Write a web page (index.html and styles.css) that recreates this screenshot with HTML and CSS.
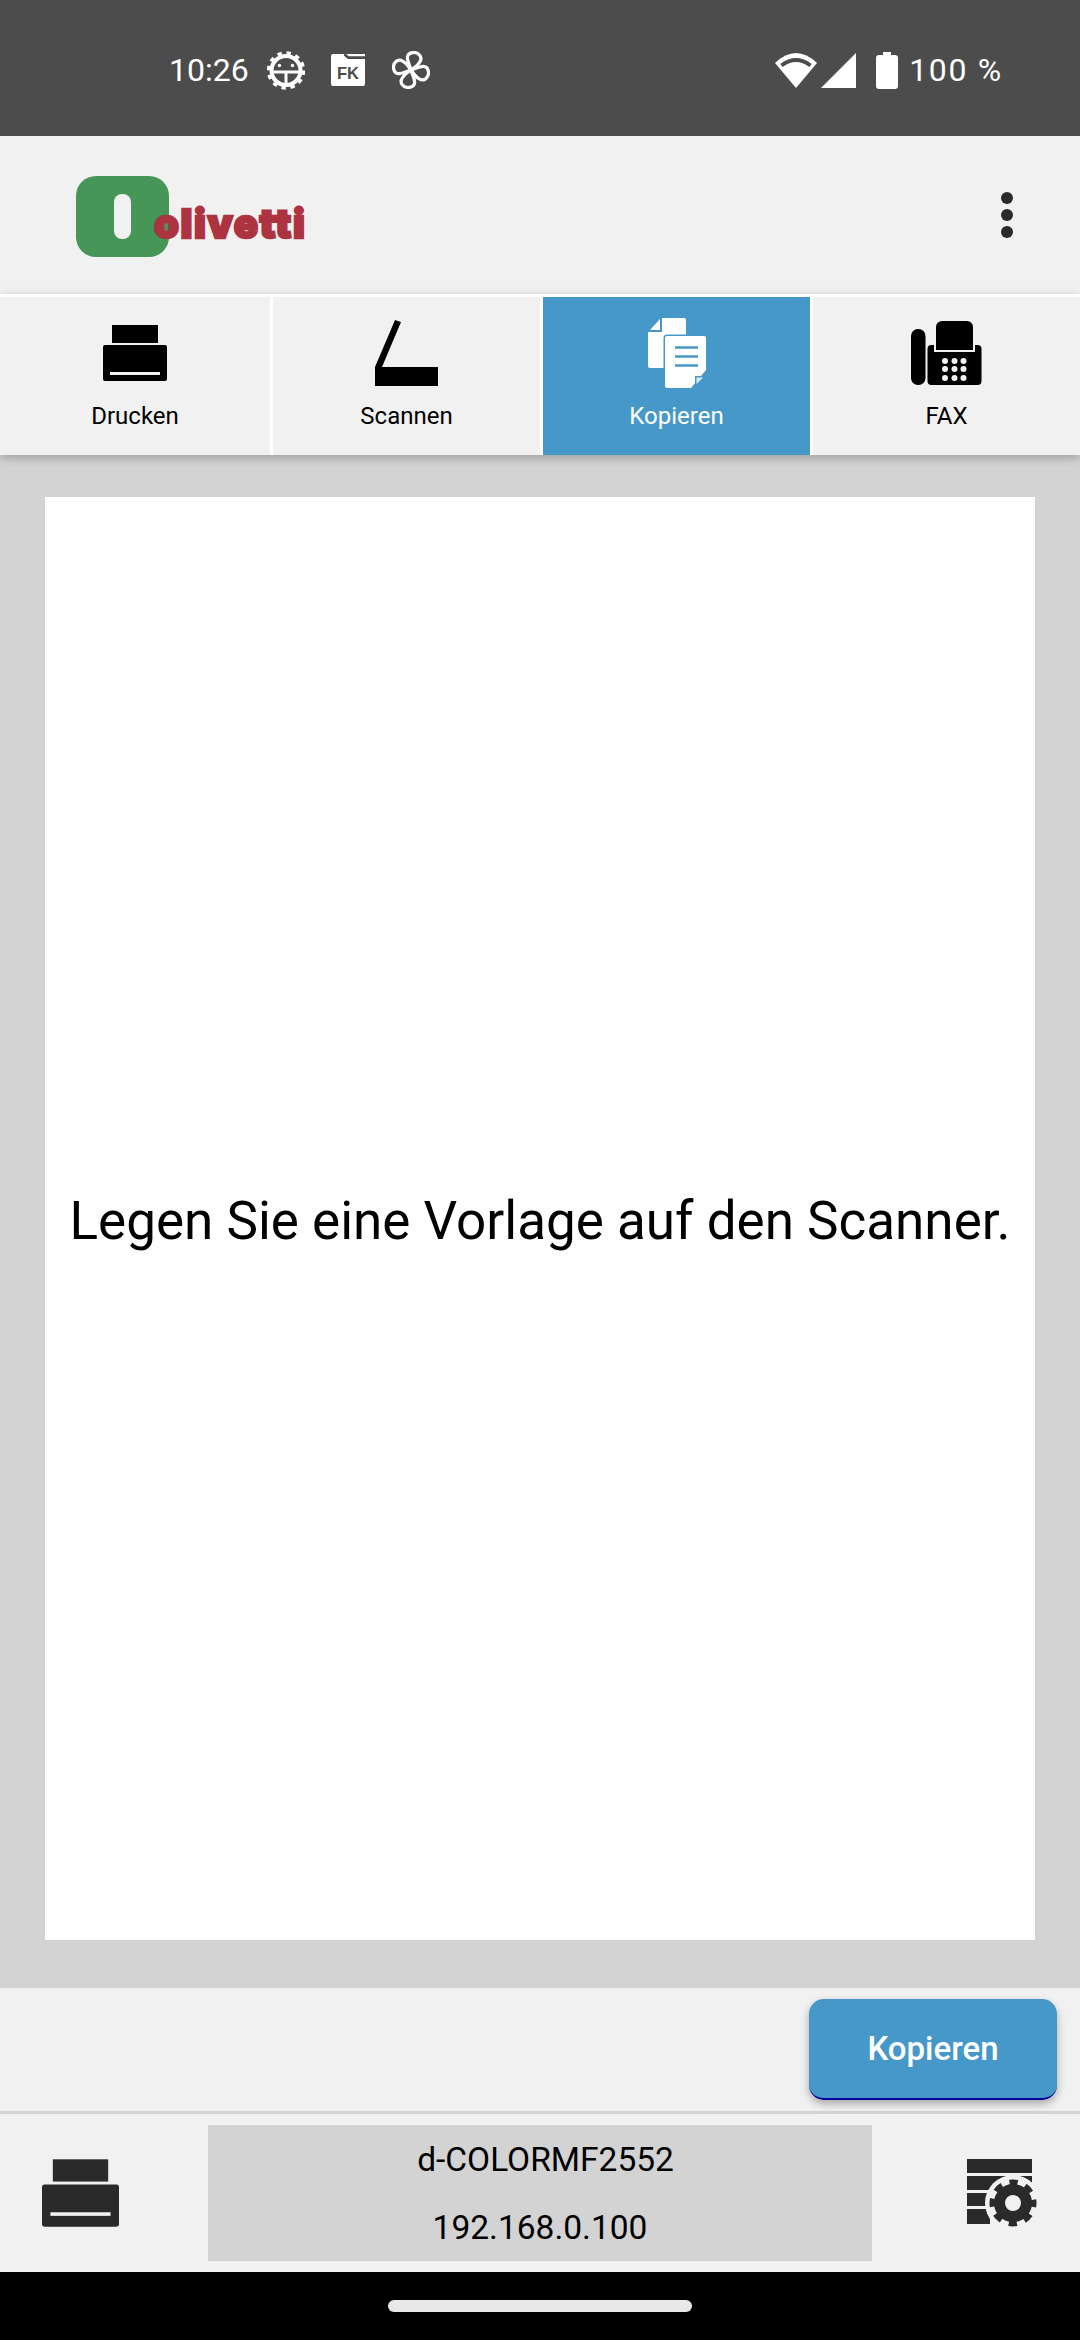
FILE: index.html
```html
<!DOCTYPE html>
<html lang="de">
<head>
    <meta charset="UTF-8">
    <meta name="viewport" content="width=device-width, initial-scale=1.0">
    <title>Kopieren</title>
    <link rel="stylesheet" href="styles.css">
</head>
<body>
    <!-- Android status bar -->
    <div class="status-bar">
        <div class="status-left">
            <span class="status-time">10:26</span>
            <svg class="icon-bug" viewBox="0 0 38 39">
                <circle cx="19" cy="19.5" r="14.5" fill="none" stroke="#fff" stroke-width="4"/>
                <circle cx="19" cy="19.5" r="17.5" fill="none" stroke="#fff" stroke-width="3.4" stroke-dasharray="4.4 4.76"/>
                <path d="M5 21H33M19 21V33" fill="none" stroke="#fff" stroke-width="3"/>
                <circle cx="12.5" cy="14.5" r="1.7" fill="#fff"/>
                <circle cx="25.5" cy="14.5" r="1.7" fill="#fff"/>
            </svg>
            <svg class="icon-folder" viewBox="0 0 34 32">
                <path d="M2 0H13L18 5H34V30a2 2 0 0 1-2 2H2a2 2 0 0 1-2-2V2a2 2 0 0 1 2-2Z" fill="#fff"/>
                <path d="M14 0H34V2.4H16.5Z" fill="#fff"/>
                <path d="M13.5 0.4L17.5 3.8H34" fill="none" stroke="#4c4c4c" stroke-width="2.6"/>
                <text class="folder-text" x="6" y="25" textLength="22" lengthAdjust="spacingAndGlyphs">FK</text>
            </svg>
            <svg class="icon-fan" viewBox="0 0 38 38">
                <g fill="none" stroke="#fff" stroke-width="3.2" stroke-linejoin="round">
                    <path id="petal" d="M19 19C18 14 14.5 10 15.5 5.5C16.5 1 24 0 27.5 4C31 8 28 13 19 19Z"/>
                    <use href="#petal" transform="rotate(90 19 19)"/>
                    <use href="#petal" transform="rotate(180 19 19)"/>
                    <use href="#petal" transform="rotate(270 19 19)"/>
                </g>
            </svg>
        </div>
        <div class="status-right">
            <svg class="icon-wifi" viewBox="0 0 42 35">
                <path d="M21 35L0 10Q21 -10 42 10Z" fill="#fff"/>
                <path d="M6.5 12.5Q21 1.5 35.5 12.5" fill="none" stroke="#4c4c4c" stroke-width="4"/>
            </svg>
            <svg class="icon-signal" viewBox="0 0 35 35"><path d="M35 0V35H0Z" fill="#fff"/></svg>
            <svg class="icon-battery" viewBox="0 0 22 37">
                <path d="M7 0H15V3H19a3 3 0 0 1 3 3V34a3 3 0 0 1-3 3H3a3 3 0 0 1-3-3V6a3 3 0 0 1 3-3H7Z" fill="#fff"/>
            </svg>
            <span class="status-battery">100 %</span>
        </div>
    </div>

    <header class="app-header">
        <div class="logo">
            <div class="logo-mark"><div class="logo-pill"></div></div>
            <span class="logo-text">olivetti</span>
        </div>
        <div class="menu-dots"><i></i><i></i><i></i></div>
    </header>

    <nav class="tabs">
        <div class="tab">
            <div class="tab-icon">
                <svg class="icon-printer" viewBox="0 0 64 56">
                    <rect x="9" y="0" width="46" height="18"/>
                    <rect x="0" y="20" width="64" height="36" rx="2"/>
                    <rect class="slot" x="7" y="47" width="50" height="3"/>
                </svg>
            </div>
            <span>Drucken</span>
        </div>
        <div class="tab">
            <div class="tab-icon">
                <svg class="icon-scanner" viewBox="0 0 63 67">
                    <path d="M20 0L26 2L7 47H63V66H0V47Z"/>
                </svg>
            </div>
            <span>Scannen</span>
        </div>
        <div class="tab active">
            <div class="tab-icon">
                <svg class="icon-copy" viewBox="0 0 58 70">
                    <path d="M14 0H36a2 2 0 0 1 2 2V50H2a2 2 0 0 1-2-2V14H14Z" fill="#fff"/>
                    <path d="M12 1V12H2Z" fill="#fff"/>
                    <path d="M19 18H56a2 2 0 0 1 2 2V52L43 70H19a2 2 0 0 1-2-2V20a2 2 0 0 1 2-2Z" fill="#fff" stroke="#4698c9" stroke-width="3" paint-order="stroke"/>
                    <path d="M47 58H57L47 68Z" fill="#4698c9"/>
                    <path d="M48.5 59.5H55L48.5 66Z" fill="#dcecf6"/>
                    <path d="M27 29.5H50M27 38.5H50M27 47.5H50" stroke="#4698c9" stroke-width="2.4"/>
                </svg>
            </div>
            <span>Kopieren</span>
        </div>
        <div class="tab">
            <div class="tab-icon">
                <svg class="icon-fax" viewBox="0 0 71 64">
                    <rect x="0" y="8" width="14.5" height="56" rx="7"/>
                    <rect x="16.5" y="24" width="54" height="40" rx="4"/>
                    <path d="M25 29V6a6 6 0 0 1 6-6H56a6 6 0 0 1 6 6V29Z" stroke="#f1f1f1" stroke-width="4" paint-order="stroke"/>
                    <g fill="#f1f1f1">
                        <circle cx="34" cy="40" r="3"/><circle cx="43.5" cy="40" r="3"/><circle cx="52.5" cy="40" r="3"/>
                        <circle cx="34" cy="48" r="3"/><circle cx="43.5" cy="48" r="3"/><circle cx="52.5" cy="48" r="3"/>
                        <circle cx="34" cy="57" r="3"/><circle cx="43.5" cy="57" r="3"/><circle cx="52.5" cy="57" r="3"/>
                    </g>
                </svg>
            </div>
            <span>FAX</span>
        </div>
    </nav>

    <main class="content">
        <div class="preview">
            <p class="preview-text">Legen Sie eine Vorlage auf den Scanner.</p>
        </div>
    </main>

    <div class="action-bar">
        <button class="btn-primary">Kopieren</button>
    </div>

    <footer class="device-bar">
        <div class="device-side">
            <svg class="icon-printer dark" viewBox="0 0 64 56">
                <rect x="9" y="0" width="46" height="18.5"/>
                <rect x="0" y="21" width="64" height="35" rx="2"/>
                <rect class="slot" x="7" y="44" width="50" height="3"/>
            </svg>
        </div>
        <div class="device-info">
            <div class="device-name">d-COLORMF2552</div>
            <div>192.168.0.100</div>
        </div>
        <div class="device-side">
            <svg class="icon-settings" viewBox="0 0 70 68">
                <g fill="#2a2a2a">
                    <rect x="0" y="0" width="65" height="14"/>
                    <rect x="0" y="17" width="65" height="14"/>
                    <rect x="0" y="34" width="65" height="13"/>
                    <rect x="0" y="50" width="23" height="15"/>
                </g>
                <circle cx="46" cy="44" r="28" fill="#f1f1f1"/>
                <circle cx="46" cy="44" r="13.5" fill="none" stroke="#2a2a2a" stroke-width="11"/>
                <circle cx="46" cy="44" r="20" fill="none" stroke="#2a2a2a" stroke-width="7" stroke-dasharray="8 7.7" stroke-dashoffset="4"/>
            </svg>
        </div>
    </footer>

    <div class="nav-bar"><div class="home-pill"></div></div>
</body>
</html>
```

FILE: styles.css
```css
* {
    box-sizing: border-box;
}
body {
    margin: 0;
    width: 1080px;
    height: 2340px;
    display: flex;
    flex-direction: column;
    background-color: #d3d3d3;
    font-family: Roboto, "Noto Sans", sans-serif;
    color: #000;
}
svg {
    display: block;
}

/* status bar */
.status-bar {
    height: 136px;
    flex: none;
    display: flex;
    justify-content: space-between;
    align-items: center;
    padding: 4px 77px 0 169px;
    background-color: #4c4c4c;
    color: #fff;
    font-size: 32px;
}
.status-left,
.status-right {
    display: flex;
    align-items: center;
}
.status-time {
    width: 98px;
}
.icon-bug {
    width: 38px;
    height: 39px;
}
.icon-folder {
    width: 34px;
    height: 32px;
    margin-left: 26px;
}
.folder-text {
    font-family: "Liberation Sans", sans-serif;
    font-size: 17px;
    font-weight: 700;
    fill: #4c4c4c;
}
.icon-fan {
    width: 38px;
    height: 38px;
    margin-left: 27px;
}
.icon-wifi {
    width: 42px;
    height: 35px;
}
.icon-signal {
    width: 35px;
    height: 35px;
    margin-left: 4px;
}
.icon-battery {
    width: 22px;
    height: 37px;
    margin-left: 20px;
}
.status-battery {
    margin-left: 11px;
    letter-spacing: 1.7px;
}

/* app header */
.app-header {
    height: 158px;
    flex: none;
    display: flex;
    justify-content: space-between;
    align-items: center;
    padding: 0 67px 0 76px;
    background-color: #f1f1f1;
}
.logo {
    position: relative;
    width: 93px;
    height: 81px;
    margin-top: 3px;
}
.logo-mark {
    width: 93px;
    height: 81px;
    display: flex;
    justify-content: center;
    align-items: center;
    background-color: #469658;
    border-radius: 20px;
}
.logo-pill {
    width: 17px;
    height: 45px;
    background-color: #f1f1f1;
    border-radius: 8px;
}
.logo-text {
    position: absolute;
    left: 78px;
    top: 26px;
    font-family: Inter, Roboto, sans-serif;
    font-size: 40px;
    line-height: 44px;
    font-weight: 900;
    letter-spacing: 1.6px;
    color: #ad3340;
    -webkit-text-stroke: 2.4px #ad3340;
    white-space: nowrap;
}
.menu-dots {
    display: flex;
    flex-direction: column;
    gap: 5px;
    margin-bottom: 1px;
}
.menu-dots i {
    display: block;
    width: 12px;
    height: 12px;
    background-color: #2a2a2a;
    border-radius: 50%;
}

/* tabs */
.tabs {
    height: 161px;
    flex: none;
    position: relative;
    display: grid;
    grid-template-columns: 270px 267px 267px 267px;
    column-gap: 3px;
    padding-top: 3px;
    background-color: #fff;
    box-shadow: 0 3px 9px rgba(0, 0, 0, 0.25);
}
.tab {
    display: flex;
    flex-direction: column;
    align-items: center;
    padding-top: 20px;
    background-color: #f1f1f1;
    font-size: 24px;
    line-height: 28px;
}
.tab.active {
    background-color: #4698c9;
    color: #fff;
}
.tab-icon {
    height: 72px;
    margin-bottom: 13px;
    display: flex;
    align-items: center;
    justify-content: center;
}
.icon-printer {
    width: 64px;
    height: 56px;
}
.slot {
    fill: #f1f1f1;
}
.icon-scanner {
    width: 63px;
    height: 67px;
}
.icon-copy {
    width: 58px;
    height: 70px;
}
.icon-fax {
    width: 71px;
    height: 64px;
}

/* preview area */
.content {
    flex: 1;
    display: flex;
    padding: 42px 45px 48px;
}
.preview {
    flex: 1;
    display: flex;
    justify-content: center;
    align-items: center;
    background-color: #fff;
}
.preview-text {
    margin: 0;
    padding-top: 4px;
    font-size: 53px;
    white-space: nowrap;
}

/* action button */
.action-bar {
    height: 126px;
    flex: none;
    display: flex;
    justify-content: flex-end;
    padding: 11px 23px 0 0;
    background-color: #f1f1f1;
    border-bottom: 3px solid #d3d3d3;
}
.btn-primary {
    width: 248px;
    height: 101px;
    padding: 0;
    border: none;
    border-bottom: 2px solid #00009c;
    border-radius: 15px;
    background-color: #4698c9;
    color: #fff;
    font-family: Roboto, sans-serif;
    font-size: 33px;
    font-weight: 500;
    box-shadow: 0 4px 8px rgba(0, 0, 0, 0.3);
}

/* device bar */
.device-bar {
    height: 158px;
    flex: none;
    display: grid;
    grid-template-columns: 208px 664px 208px;
    align-items: center;
    background-color: #f1f1f1;
}
.device-side {
    display: flex;
}
.device-side .icon-printer {
    width: 77px;
    height: 68px;
    margin-left: 42px;
}
.dark {
    fill: #2a2a2a;
}
.icon-settings {
    width: 70px;
    height: 68px;
    margin-left: 95px;
}
.device-info {
    height: 136px;
    padding-top: 1px;
    background-color: #d3d3d3;
    text-align: center;
    font-size: 33.5px;
    line-height: 68px;
}
.device-name {
    padding-left: 11px;
}

/* android nav bar */
.nav-bar {
    height: 68px;
    flex: none;
    padding-top: 28px;
    background-color: #000;
}
.home-pill {
    width: 304px;
    height: 12px;
    margin-left: 388px;
    background-color: #e8e8e8;
    border-radius: 6px;
}
```
